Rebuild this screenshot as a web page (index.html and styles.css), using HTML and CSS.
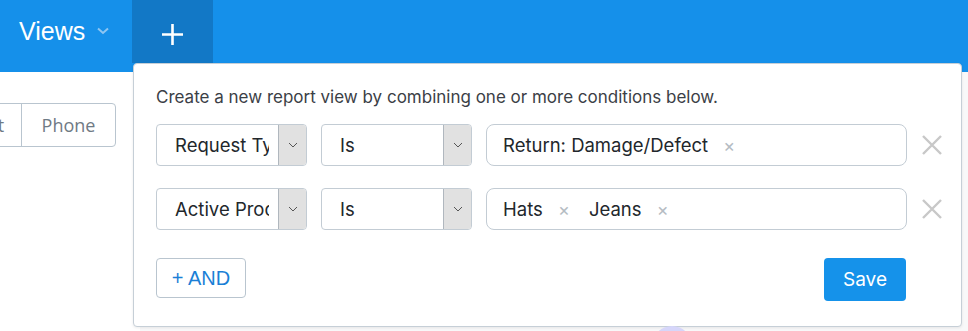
FILE: index.html
```html
<!DOCTYPE html>
<html lang="en">
<head>
    <meta charset="UTF-8">
    <title>Report Views</title>
    <link rel="stylesheet" href="styles.css">
</head>
<body>

    <!-- Top Bar -->
    <header class="topbar">
        <div class="views">Views
            <svg class="chev" width="12" height="8" viewBox="0 0 12 8"><path d="M1 1.5 L6 6 L11 1.5" fill="none" stroke="#8ec6f2" stroke-width="2"/></svg>
        </div>
        <div class="add-tab">
            <svg width="21" height="21" viewBox="0 0 21 21"><path d="M10.5 0 V21 M0 10.5 H21" stroke="#fff" stroke-width="2.6"/></svg>
        </div>
    </header>

    <!-- Page behind the popover -->
    <main class="page">
        <div class="btn-group">
            <span class="seg seg-cut">t</span>
            <span class="seg">Phone</span>
        </div>
    </main>

    <!-- New View Popover -->
    <section class="popover">
        <p class="intro">Create a new report view by combining one or more conditions below.</p>

        <div class="cond-row">
            <div class="select wide"><span class="sel-text">Request Type</span><span class="sel-arrow"><svg width="10" height="6" viewBox="0 0 10 6"><path d="M1 1 L5 5 L9 1" fill="none" stroke="#555" stroke-width="1"/></svg></span></div>
            <div class="select"><span class="sel-text">Is</span><span class="sel-arrow"><svg width="10" height="6" viewBox="0 0 10 6"><path d="M1 1 L5 5 L9 1" fill="none" stroke="#555" stroke-width="1"/></svg></span></div>
            <div class="tags">
                <span class="tag">Return: Damage/Defect <span class="tag-x">&times;</span></span>
            </div>
            <span class="remove"><svg width="20" height="20" viewBox="0 0 20 20"><path d="M1 1 L19 19 M19 1 L1 19" stroke="#c8c8c8" stroke-width="2.4"/></svg></span>
        </div>

        <div class="cond-row">
            <div class="select wide"><span class="sel-text">Active Product</span><span class="sel-arrow"><svg width="10" height="6" viewBox="0 0 10 6"><path d="M1 1 L5 5 L9 1" fill="none" stroke="#555" stroke-width="1"/></svg></span></div>
            <div class="select"><span class="sel-text">Is</span><span class="sel-arrow"><svg width="10" height="6" viewBox="0 0 10 6"><path d="M1 1 L5 5 L9 1" fill="none" stroke="#555" stroke-width="1"/></svg></span></div>
            <div class="tags">
                <span class="tag">Hats <span class="tag-x">&times;</span></span>
                <span class="tag">Jeans <span class="tag-x">&times;</span></span>
            </div>
            <span class="remove"><svg width="20" height="20" viewBox="0 0 20 20"><path d="M1 1 L19 19 M19 1 L1 19" stroke="#c8c8c8" stroke-width="2.4"/></svg></span>
        </div>

        <div class="actions">
            <button class="and-btn">+ AND</button>
            <button class="save-btn">Save</button>
        </div>
    </section>

    <div class="blob"></div>

</body>
</html>
```

FILE: styles.css
```css
/* Reset */
body, p {
    margin: 0;
    padding: 0;
}

body {
    font-family: Inter, "Open Sans", sans-serif;
    background-color: #f8f8f9;
    color: #2f3338;
    width: 968px;
    height: 331px;
    overflow: hidden;
    position: relative;
}

/* Top bar */
.topbar {
    height: 72px;
    background-color: #1590ea;
    display: flex;
}

.views {
    display: flex;
    align-items: flex-start;
    padding: 17px 0 0 19px;
    width: 113px;
    color: #fff;
    font-size: 25px;
    font-family: "Liberation Sans", Arial, sans-serif;
}

.views .chev {
    margin: 10px 0 0 12px;
}

.add-tab {
    width: 81px;
    height: 63px;
    background-color: #1278c6;
    display: flex;
    justify-content: center;
    padding-top: 24px;
    box-sizing: border-box;
}

/* Page behind */
.page {
    background-color: #fff;
    height: 259px;
    width: 140px;
    padding-top: 31px;
    box-sizing: border-box;
}

.btn-group {
    display: flex;
    margin-left: -20px;
    width: 136px;
    height: 44px;
    border: 1px solid #b9c5cf;
    border-radius: 4px;
    box-sizing: border-box;
}

.seg {
    display: flex;
    align-items: center;
    justify-content: center;
    font-size: 18px;
    color: #6f7a85;
    font-family: "Open Sans", sans-serif;
    flex: 1;
}

.seg-cut {
    flex: 0 0 40px;
    border-right: 1px solid #b9c5cf;
}

/* Popover */
.popover {
    position: absolute;
    left: 133px;
    top: 63px;
    width: 829px;
    height: 264px;
    box-sizing: border-box;
    background-color: #fff;
    border: 1px solid #c6cfd7;
    border-radius: 4px;
    box-shadow: 0 1px 3px rgba(0, 0, 0, 0.08);
    padding: 22px 16px 0 22px;
}

.intro {
    font-size: 17px;
    color: #3b4046;
    line-height: 22px;
    margin-bottom: 16px;
}

.cond-row {
    display: flex;
    align-items: center;
    height: 42px;
    margin-bottom: 22px;
}

.cond-row > * {
    flex-shrink: 0;
}

.select {
    display: flex;
    width: 151px;
    height: 42px;
    border: 1px solid #c3ccd4;
    border-radius: 4px;
    box-sizing: border-box;
    margin-right: 14px;
    overflow: hidden;
}

.sel-text {
    flex: 1;
    margin-left: 18px;
    font-size: 18.5px;
    line-height: 40px;
    white-space: nowrap;
    overflow: hidden;
    color: #22272c;
}

.select.wide .sel-text {
    margin-right: 9px;
}

.sel-arrow {
    width: 27px;
    background-color: #e1e1e1;
    border-left: 1px solid #b0b7be;
    display: flex;
    align-items: center;
    justify-content: center;
}

.tags {
    display: flex;
    align-items: center;
    width: 421px;
    height: 42px;
    border: 1px solid #c3ccd4;
    border-radius: 8px;
    box-sizing: border-box;
    padding-left: 16px;
}

.tag {
    font-size: 18.5px;
    color: #22272c;
    margin-right: 19px;
}

.tag-x {
    color: #b5bcc3;
    font-size: 18px;
    margin-left: 10px;
}

.remove {
    display: flex;
    margin-left: 15px;
}

/* Buttons */
.actions {
    display: flex;
    justify-content: space-between;
    align-items: flex-start;
    width: 750px;
    margin-top: 28px;
}

.and-btn {
    width: 90px;
    height: 40px;
    background-color: #fff;
    border: 1px solid #b9c5cf;
    border-radius: 4px;
    color: #1b7fd6;
    font-size: 20px;
    font-family: "Liberation Sans", Arial, sans-serif;
}

.save-btn {
    width: 82px;
    height: 43px;
    background-color: #1592ea;
    border: none;
    border-radius: 4px;
    color: #fff;
    font-size: 19px;
    font-family: Inter, sans-serif;
}

.blob {
    position: absolute;
    left: 652px;
    top: 326px;
    width: 40px;
    height: 40px;
    border-radius: 50%;
    background-color: #d6d6fa;
}
```
